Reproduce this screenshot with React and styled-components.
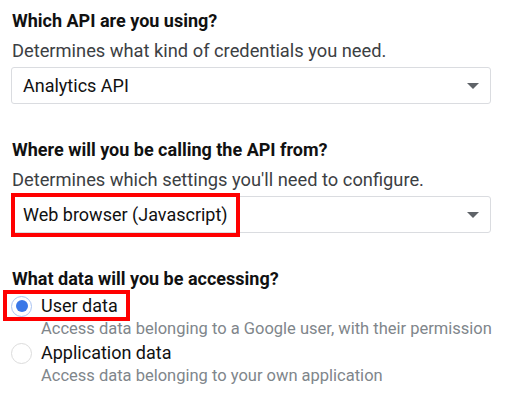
import React from 'react';
import styled, { createGlobalStyle } from 'styled-components';

const GlobalStyle = createGlobalStyle`
  html, body {
    margin: 0;
    padding: 0;
    background: #fff;
  }
  body {
    font-family: Roboto, "Liberation Sans", Arial, sans-serif;
    color: #202124;
  }
`;

const Page = styled.div`
  width: 506px;
  height: 394px;
  box-sizing: border-box;
  padding: 10px 15px 0 11px;
  display: flex;
  flex-direction: column;
  overflow: hidden;
`;

const Section = styled.section`
  display: flex;
  flex-direction: column;
  margin-bottom: ${(p) => p.$gap || 0}px;
`;

const Heading = styled.h3`
  margin: 0 0 0 1px;
  font-size: 18px;
  line-height: 22px;
  font-weight: 700;
  color: #111;
`;

const Hint = styled.p`
  margin: 8px 0 5px 1px;
  font-size: 18.3px;
  line-height: 22px;
  color: #3c4043;
`;

const SelectBox = styled.div`
  position: relative;
  height: 35px;
  border: 1px solid #dadce0;
  border-radius: 3px;
  display: flex;
  align-items: center;
  justify-content: space-between;
  padding: 0 11px 0 11px;
  font-size: 18px;
  color: #111;
`;

const Arrow = styled.span`
  width: 0;
  height: 0;
  border-left: 6px solid transparent;
  border-right: 6px solid transparent;
  border-top: 6px solid #5f6368;
`;

const Highlight = styled.span`
  position: absolute;
  left: ${(p) => p.$left}px;
  top: ${(p) => p.$top}px;
  width: ${(p) => p.$w}px;
  height: ${(p) => p.$h}px;
  border: 4px solid #f00;
  box-sizing: border-box;
  pointer-events: none;
`;

const Options = styled.div`
  display: flex;
  flex-direction: column;
  margin-top: 4px;
`;

const Option = styled.label`
  position: relative;
  display: grid;
  grid-template-columns: 20px 1fr;
  column-gap: 10px;
  align-items: center;
`;

const Radio = styled.span`
  width: 21px;
  height: 21px;
  box-sizing: border-box;
  border-radius: 50%;
  border: 1px solid ${(p) => (p.$on ? '#a9c3f2' : '#dcdcdc')};
  display: flex;
  align-items: center;
  justify-content: center;
  &::after {
    content: '';
    display: ${(p) => (p.$on ? 'block' : 'none')};
    width: 12px;
    height: 12px;
    border-radius: 50%;
    background: #3b78e7;
  }
`;

const OptionLabel = styled.span`
  font-size: 18px;
  line-height: 24px;
  color: #111;
`;

const OptionDesc = styled.span`
  grid-column: 2;
  font-size: 16.5px;
  line-height: 22px;
  margin-bottom: 1px;
  color: #80868b;
  white-space: nowrap;
`;

const App = () => (
  <React.Fragment>
    <GlobalStyle />
    <Page>
      <Section $gap={35}>
        <Heading>Which API are you using?</Heading>
        <Hint>Determines what kind of credentials you need.</Hint>
        <SelectBox>
          <span>Analytics API</span>
          <Arrow />
        </SelectBox>
      </Section>
      <Section $gap={35}>
        <Heading>Where will you be calling the API from?</Heading>
        <Hint>Determines which settings you'll need to configure.</Hint>
        <SelectBox>
          <span>Web browser (Javascript)</span>
          <Arrow />
          <Highlight $left={-1} $top={-4} $w={229} $h={44} />
        </SelectBox>
      </Section>
      <Section>
        <Heading>What data will you be accessing?</Heading>
        <Options>
          <Option>
            <Radio $on />
            <OptionLabel>User data</OptionLabel>
            <OptionDesc>Access data belonging to a Google user, with their permission</OptionDesc>
            <Highlight $left={-8} $top={-4} $w={127} $h={31} />
          </Option>
          <Option>
            <Radio />
            <OptionLabel>Application data</OptionLabel>
            <OptionDesc>Access data belonging to your own application</OptionDesc>
          </Option>
        </Options>
      </Section>
    </Page>
  </React.Fragment>
);

export default App;
